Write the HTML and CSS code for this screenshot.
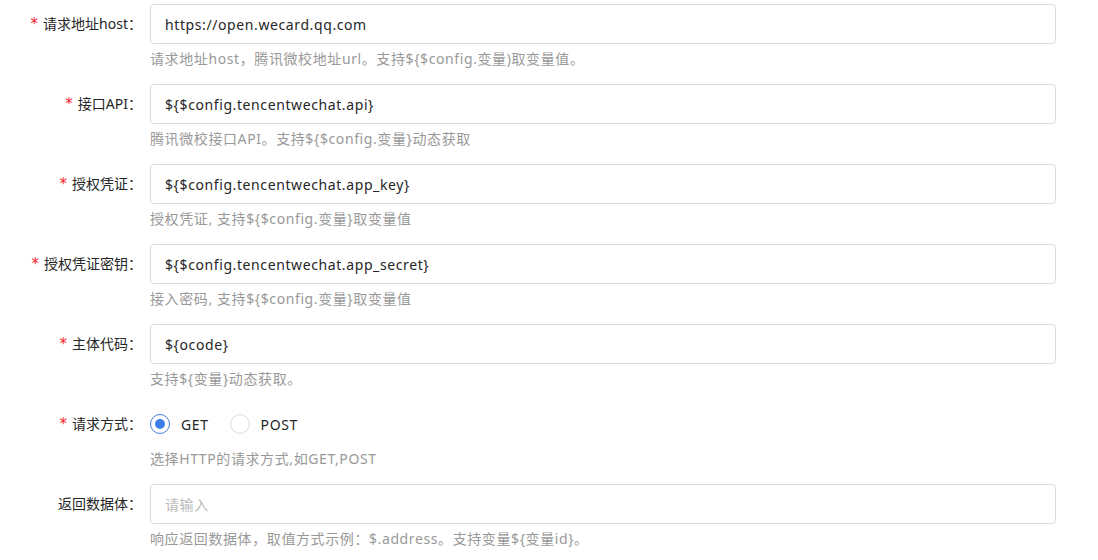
FILE: index.html
```html
<!DOCTYPE html>
<html lang="zh-CN">
<head>
    <meta charset="UTF-8">
    <title>接口配置</title>
    <link rel="stylesheet" href="styles.css">
</head>
<body>
    <form class="form">
        <div class="form-item">
            <label class="form-label required">请求地址host：</label>
            <div class="form-control">
                <input class="input" type="text" value="https://open.wecard.qq.com">
                <div class="form-help">请求地址host，腾讯微校地址url。支持${$config.变量)取变量值。</div>
            </div>
        </div>

        <div class="form-item">
            <label class="form-label required">接口API：</label>
            <div class="form-control">
                <input class="input" type="text" value="${$config.tencentwechat.api}">
                <div class="form-help">腾讯微校接口API。支持${$config.变量}动态获取</div>
            </div>
        </div>

        <div class="form-item">
            <label class="form-label required">授权凭证：</label>
            <div class="form-control">
                <input class="input" type="text" value="${$config.tencentwechat.app_key}">
                <div class="form-help">授权凭证, 支持${$config.变量}取变量值</div>
            </div>
        </div>

        <div class="form-item">
            <label class="form-label required">授权凭证密钥：</label>
            <div class="form-control">
                <input class="input" type="text" value="${$config.tencentwechat.app_secret}">
                <div class="form-help">接入密码, 支持${$config.变量}取变量值</div>
            </div>
        </div>

        <div class="form-item">
            <label class="form-label required">主体代码：</label>
            <div class="form-control">
                <input class="input" type="text" value="${ocode}">
                <div class="form-help">支持${变量}动态获取。</div>
            </div>
        </div>

        <div class="form-item">
            <label class="form-label required">请求方式：</label>
            <div class="form-control">
                <div class="radio-group">
                    <label class="radio checked"><span class="radio-dot"></span>GET</label>
                    <label class="radio"><span class="radio-dot"></span>POST</label>
                </div>
                <div class="form-help">选择HTTP的请求方式,如GET,POST</div>
            </div>
        </div>

        <div class="form-item">
            <label class="form-label">返回数据体：</label>
            <div class="form-control">
                <input class="input" type="text" placeholder="请输入">
                <div class="form-help">响应返回数据体，取值方式示例：$.address。支持变量${变量id}。</div>
            </div>
        </div>
    </form>
</body>
</html>
```

FILE: styles.css
```css
body {
    font-family: "Noto Sans", "Noto Sans CJK SC", sans-serif;
    font-size: 14px;
    color: #262626;
    background-color: #fff;
    margin: 0;
    padding: 4px 0 0 0;
}
.form {
    width: 1056px;
}
.form-item {
    display: flex;
    margin-bottom: 14px;
}
.form-label {
    width: 142px;
    padding-right: 8px;
    height: 40px;
    line-height: 40px;
    text-align: right;
    flex-shrink: 0;
    white-space: nowrap;
}
.form-label.required::before {
    content: "*";
    color: #f5222d;
    margin-right: 5px;
    font-family: "DejaVu Sans", sans-serif;
    font-size: 15px;
}
.form-control {
    flex: 1;
}
.input {
    box-sizing: border-box;
    width: 100%;
    height: 40px;
    padding: 0 14px;
    font-family: inherit;
    font-size: 14px;
    letter-spacing: 0.6px;
    color: #262626;
    border: 1px solid #dcdcdc;
    border-radius: 4px;
    outline: none;
}
.input::placeholder {
    color: #bbb;
}
.form-help {
    margin-top: 4px;
    line-height: 22px;
    letter-spacing: 0.6px;
    color: #999;
}
.radio-group {
    display: flex;
    height: 40px;
    align-items: center;
    gap: 21px;
    letter-spacing: 0.6px;
}
.radio {
    display: flex;
    align-items: center;
    gap: 11px;
    cursor: pointer;
}
.radio-dot {
    box-sizing: border-box;
    width: 20px;
    height: 20px;
    border: 1px solid #dcdcdc;
    border-radius: 50%;
    position: relative;
}
.radio.checked .radio-dot {
    border-color: #3d7ee8;
}
.radio.checked .radio-dot::after {
    content: "";
    position: absolute;
    left: 4px;
    top: 4px;
    width: 10px;
    height: 10px;
    border-radius: 50%;
    background-color: #3d7ee8;
}
```
